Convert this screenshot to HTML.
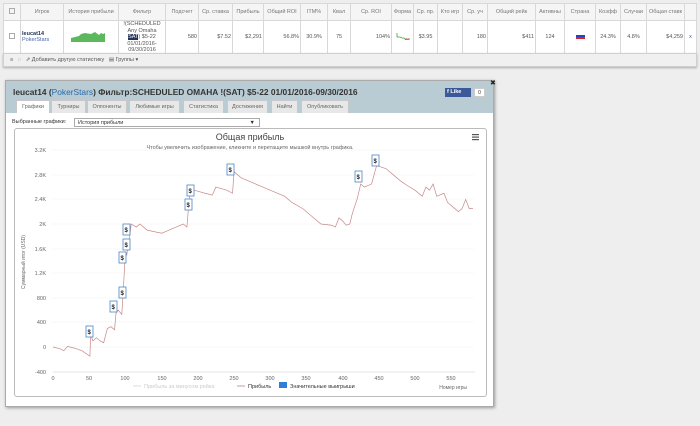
<!DOCTYPE html>
<html><head><meta charset="utf-8"><style>
*{margin:0;padding:0;box-sizing:border-box}
body{width:700px;height:426px;background:#eeeeee;font-family:"Liberation Sans",sans-serif;position:relative;overflow:hidden;color:#333}
.abs{position:absolute}
table{border-collapse:collapse;position:absolute;left:3px;top:3px;width:694px;font-size:5.5px;background:#fff}
td{border:1px solid #d8d8d8;text-align:center;color:#555;padding:0 1px}
tr.h td{height:17px;background:#f5f5f5;color:#777}
tr.d td{height:33px}
.r{text-align:right}
.tb{position:absolute;left:3px;top:53px;width:694px;height:14px;background:#f0f0f0;border:1px solid #d0d0d0;font-size:5.5px;color:#555;padding:3px 6px;box-shadow:0 1px 2px #aaa}
.dlg{position:absolute;left:5px;top:80px;width:489px;height:327px;background:#fff;border:1px solid #aaa;box-shadow:1px 1px 3px #999}
.hd{position:absolute;left:0;top:0;width:487px;height:32px;background:#b9ccd4}
.tab{position:absolute;top:19px;height:13px;background:#e8e8e8;border:1px solid #c8c8c8;border-bottom:none;font-size:5.5px;color:#666;text-align:center;line-height:12px}
</style></head><body>
<table>
<tr class="h"><td style="width:17px"><span style="display:inline-block;width:6px;height:6px;border:1px solid #aaa"></span></td><td style="width:43px">Игрок</td><td style="width:55px">История прибыли</td><td style="width:47px">Фильтр</td><td style="width:33px">Подсчет</td><td style="width:34px">Ср. ставка</td><td style="width:31px">Прибыль</td><td style="width:37px">Общий ROI</td><td style="width:27px">ITM%</td><td style="width:23px">Квал</td><td style="width:41px">Ср. ROI</td><td style="width:22px">Форма</td><td style="width:24px">Ср. пр.</td><td style="width:25px">Кто игр</td><td style="width:25px">Ср. уч</td><td style="width:48px">Общий рейк</td><td style="width:29px">Активны</td><td style="width:31px">Страна</td><td style="width:25px">Коэфф</td><td style="width:26px">Случаи</td><td style="width:38px">Общая ставк</td><td></td></tr>
<tr class="d"><td><span style="display:inline-block;width:6px;height:6px;border:1px solid #aaa"></span></td><td style="text-align:left;color:#336"><b style="color:#235">leucat14</b><br><span style="color:#46a">PokerStars</span></td><td><svg width="40" height="12" viewBox="0 0 40 12"><path d="M0 12V8L4 7 8 6 10 4 14 3 20 4 24 2 28 5 30 3 32 4 34 3V12Z" fill="#5cb85c"/></svg></td><td style="line-height:6.5px;font-size:5.5px">!(SCHEDULED<br>Any Omaha<br><span style="background:#235;color:#fff">SAT</span>) $5-22<br>01/01/2016-<br>09/30/2016</td><td class="r">580</td><td class="r">$7.52</td><td class="r">$2,291</td><td class="r">56.8%</td><td>30.9%</td><td>75</td><td class="r">104%</td><td><svg width="16" height="8"><path d="M2 1V5h3l2 1 2 0 2 2h3" stroke="#3a3" fill="none" stroke-width=".8"/><path d="M10 7h5" stroke="#c33" stroke-width=".8"/></svg></td><td>$3.95</td><td></td><td class="r">180</td><td class="r">$411</td><td>124</td><td><span style="display:inline-block;width:9px;height:6px;background:linear-gradient(#fff 33%,#2244cc 33%,#2244cc 66%,#d22 66%)"></span></td><td>24.3%</td><td>4.8%</td><td class="r">$4,259</td><td style="color:#46a">x</td></tr>
</table>
<div class="tb">≡ &nbsp; ◌ &nbsp; ⇗ Добавить другую статистику &nbsp; ▤ Группы ▾</div>

<div class="dlg">
<div class="hd">
<div class="abs" style="left:7px;top:6px;font-size:8.4px;font-weight:bold;color:#333">leucat14 (<span style="color:#2a6aa8;font-weight:normal">PokerStars</span>) Фильтр:SCHEDULED OMAHA !(SAT) $5-22 01/01/2016-09/30/2016</div>
<div class="abs" style="left:439px;top:7px;width:26px;height:9px;background:#3b5998;color:#fff;font-size:5.5px;font-weight:bold;line-height:9px;padding-left:2px">f Like</div>
<div class="abs" style="left:468px;top:7px;width:11px;height:9px;background:#fff;border:1px solid #ccc;font-size:5px;text-align:center;line-height:8px">0</div>
<div class="abs" style="left:484px;top:-2px;font-size:7px;color:#222">✖</div>
<div class="tab" style="left:10px;width:34px;background:#fff">Графики</div>
<div class="tab" style="left:45px;width:35px">Турниры</div>
<div class="tab" style="left:81px;width:40px">Оппоненты</div>
<div class="tab" style="left:123px;width:51px">Любимые игры</div>
<div class="tab" style="left:177px;width:41px">Статистика</div>
<div class="tab" style="left:221px;width:41px">Достижения</div>
<div class="tab" style="left:265px;width:27px">Найти</div>
<div class="tab" style="left:295px;width:48px">Опубликовать</div>
</div>
<div class="abs" style="left:6px;top:38px;font-size:5.5px;color:#333">Выбранные графики:</div>
<div class="abs" style="left:68px;top:37px;width:186px;height:9px;border:1px solid #aaa;font-size:5.5px;padding-left:3px;line-height:8px">История прибыли<span style="position:absolute;right:4px">▼</span></div>
<div class="abs" style="left:8px;top:47px;width:473px;height:269px;border:1px solid #bbb;border-radius:3px"></div>
</div>

<svg class="abs" style="left:0;top:0" width="700" height="426">
<text x="250" y="140" font-size="9" fill="#444" text-anchor="middle" font-family="Liberation Sans">Общая прибыль</text>
<text x="250" y="149" font-size="5.5" fill="#666" text-anchor="middle" font-family="Liberation Sans">Чтобы увеличить изображение, кликните и перетащите мышкой внутрь графика.</text>
<g fill="#555"><rect x="472" y="134" width="7" height="1.2"/><rect x="472" y="136.5" width="7" height="1.2"/><rect x="472" y="139" width="7" height="1.2"/></g>
<g stroke="#e6e6e6" stroke-width=".6" stroke-dasharray="1,1">
<line x1="53" x2="475" y1="150" y2="150"/><line x1="53" x2="475" y1="175" y2="175"/><line x1="53" x2="475" y1="199" y2="199"/><line x1="53" x2="475" y1="224" y2="224"/><line x1="53" x2="475" y1="249" y2="249"/><line x1="53" x2="475" y1="273" y2="273"/><line x1="53" x2="475" y1="298" y2="298"/><line x1="53" x2="475" y1="322" y2="322"/><line x1="53" x2="475" y1="347" y2="347"/></g>
<line x1="53" x2="475" y1="372" y2="372" stroke="#ccc" stroke-width=".6"/>
<g font-size="5.5" fill="#666" font-family="Liberation Sans" text-anchor="end">
<text x="46" y="152">3.2K</text><text x="46" y="177">2.8K</text><text x="46" y="201">2.4K</text><text x="46" y="226">2K</text><text x="46" y="251">1.6K</text><text x="46" y="275">1.2K</text><text x="46" y="300">800</text><text x="46" y="324">400</text><text x="46" y="349">0</text><text x="46" y="374">-400</text></g>
<g font-size="5.5" fill="#666" font-family="Liberation Sans" text-anchor="middle">
<text x="53" y="380">0</text><text x="89" y="380">50</text><text x="125" y="380">100</text><text x="162" y="380">150</text><text x="198" y="380">200</text><text x="234" y="380">250</text><text x="270" y="380">300</text><text x="306" y="380">350</text><text x="343" y="380">400</text><text x="379" y="380">450</text><text x="415" y="380">500</text><text x="451" y="380">550</text></g>
<text transform="translate(25,262) rotate(-90)" font-size="5" fill="#666" text-anchor="middle" font-family="Liberation Sans">Суммарный итог (USD)</text>
<text x="467" y="389" font-size="5" fill="#666" text-anchor="end" font-family="Liberation Sans">Номер игры</text>
<g font-size="5.5" font-family="Liberation Sans">
<line x1="133" x2="141" y1="386" y2="386" stroke="#ddd"/><text x="144" y="388" fill="#ccc">Прибыль за минусом рейка</text>
<line x1="237" x2="245" y1="386" y2="386" stroke="#c99"/><text x="248" y="388" fill="#333">Прибыль</text>
<rect x="279" y="382" width="8" height="6" fill="#2f7ed8"/><text x="290" y="388" fill="#333">Значительные выигрыши</text></g>
<g transform="translate(53,347) scale(0.724,-0.0615)">
<polyline vector-effect="non-scaling-stroke" fill="none" stroke="#c88888" stroke-width=".7" points="0,0 10,-30 15,-60 20,10 30,-20 40,-60 51,-150 52,200 55,100 60,150 65,100 70,70 75,300 80,330 85,280 87,550 90,600 95,530 97,900 100,1550 102,1500 104,1700 106,1800 108,2000 115,1950 120,2000 130,1900 150,1850 160,1900 170,1950 180,2000 185,1950 188,2400 190,2550 195,2550 210,2500 220,2470 225,2600 240,2550 248,2500 250,2850 255,2800 260,2750 270,2700 280,2650 300,2550 320,2450 330,2350 345,2250 360,2100 370,2000 385,1980 390,1950 395,2100 400,2050 405,1980 410,2000 413,2150 417,2300 420,2400 425,2650 430,2600 440,2650 447,2950 460,2900 470,2800 480,2700 490,2620 500,2550 510,2450 515,2600 520,2550 525,2650 530,2450 540,2500 545,2350 550,2300 560,2200 565,2250 570,2400 575,2250 580,2250"/></g>
<g fill="#fff" stroke="#4a86c5" stroke-width=".8" font-size="6" font-weight="bold" font-family="Liberation Sans">
<g transform="translate(86,326)"><rect width="7" height="11"/><text x="1.5" y="8" fill="#222" stroke="none">$</text></g>
<g transform="translate(110,301)"><rect width="7" height="11"/><text x="1.5" y="8" fill="#222" stroke="none">$</text></g>
<g transform="translate(119,287)"><rect width="7" height="11"/><text x="1.5" y="8" fill="#222" stroke="none">$</text></g>
<g transform="translate(119,252)"><rect width="7" height="11"/><text x="1.5" y="8" fill="#222" stroke="none">$</text></g>
<g transform="translate(123,224)"><rect width="7" height="11"/><text x="1.5" y="8" fill="#222" stroke="none">$</text></g>
<g transform="translate(123,239)"><rect width="7" height="11"/><text x="1.5" y="8" fill="#222" stroke="none">$</text></g>
<g transform="translate(185,199)"><rect width="7" height="11"/><text x="1.5" y="8" fill="#222" stroke="none">$</text></g>
<g transform="translate(187,185)"><rect width="7" height="11"/><text x="1.5" y="8" fill="#222" stroke="none">$</text></g>
<g transform="translate(227,164)"><rect width="7" height="11"/><text x="1.5" y="8" fill="#222" stroke="none">$</text></g>
<g transform="translate(355,171)"><rect width="7" height="11"/><text x="1.5" y="8" fill="#222" stroke="none">$</text></g>
<g transform="translate(372,155)"><rect width="7" height="11"/><text x="1.5" y="8" fill="#222" stroke="none">$</text></g>
</g>
</svg>
</body></html>
